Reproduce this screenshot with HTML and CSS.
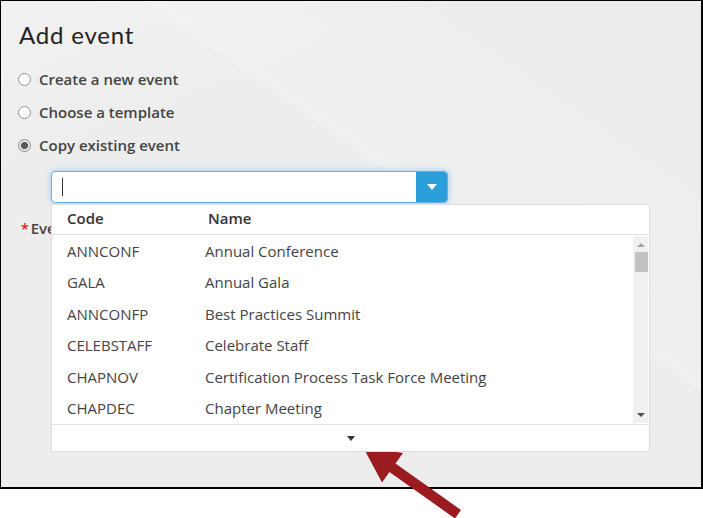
FILE: index.html
```html
<!DOCTYPE html>
<html lang="en">
<head>
    <meta charset="UTF-8">
    <meta name="viewport" content="width=device-width, initial-scale=1.0">
    <title>Add event</title>
    <link rel="stylesheet" href="styles.css">
</head>
<body>
    <div class="panel">
        <h1 class="title">Add event</h1>

        <div class="options">
            <label class="option"><input type="radio" name="mode"> Create a new event</label>
            <label class="option"><input type="radio" name="mode"> Choose a template</label>
            <label class="option"><input type="radio" name="mode" checked> Copy existing event</label>
        </div>

        <div class="combo">
            <div class="combo-input">
                <span class="caret-line"></span>
                <button class="combo-btn" type="button"><span class="tri-down"></span></button>
            </div>

            <div class="dropdown">
                <div class="dd-head">
                    <span class="col-code">Code</span>
                    <span class="col-name">Name</span>
                </div>
                <div class="dd-body">
                    <div class="dd-rows">
                        <div class="dd-row"><span>ANNCONF</span><span>Annual Conference</span></div>
                        <div class="dd-row"><span>GALA</span><span>Annual Gala</span></div>
                        <div class="dd-row"><span>ANNCONFP</span><span>Best Practices Summit</span></div>
                        <div class="dd-row"><span>CELEBSTAFF</span><span>Celebrate Staff</span></div>
                        <div class="dd-row"><span>CHAPNOV</span><span>Certification Process Task Force Meeting</span></div>
                        <div class="dd-row"><span>CHAPDEC</span><span>Chapter Meeting</span></div>
                    </div>
                    <div class="scrollbar">
                        <span class="sb-up"></span>
                        <span class="sb-thumb"></span>
                        <span class="sb-down"></span>
                    </div>
                </div>
                <div class="dd-foot"><span class="more"></span></div>
            </div>
        </div>

        <div class="field-label"><span class="req">*</span>Event name</div>
    </div>

    <!-- annotation arrow -->
    <svg class="pointer" width="703" height="518" viewBox="0 0 703 518">
        <polygon fill="#9b1b21" points="363,447 403,453 395.5,463.5 461,510 455,518.5 389.5,472 382,482.5"/>
    </svg>
</body>
</html>
```

FILE: styles.css
```css
body {
    margin: 0;
    background: #fff;
    font-family: "Open Sans", "Noto Sans", sans-serif;
    position: relative;
    width: 703px;
    height: 518px;
    overflow: hidden;
}

.panel {
    box-sizing: border-box;
    width: 703px;
    height: 489px;
    border: 1px solid #000;
    border-right-width: 2px;
    border-bottom-width: 2px;
    padding: 19px 18px 0;
    background-color: #ededed;
    background-image:
        linear-gradient(160deg, rgba(255,255,255,0.25) 0, rgba(255,255,255,0) 25%),
        linear-gradient(35deg, rgba(255,255,255,0) 60%, rgba(255,255,255,0.15) 60%, rgba(255,255,255,0) 85%);
}

.title {
    margin: 0;
    font-family: Lato, "Noto Sans", sans-serif;
    font-weight: 400;
    font-size: 24px;
    line-height: 30px;
    letter-spacing: 0.8px;
    color: #222;
}

.options {
    margin-top: 19px;
    display: flex;
    flex-direction: column;
    gap: 13px;
}

.option {
    display: flex;
    align-items: center;
    gap: 8px;
    font-size: 15px;
    font-weight: 600;
    line-height: 20px;
    color: #444;
}

.option input {
    appearance: none;
    -webkit-appearance: none;
    margin: 0 0 0 -1px;
    width: 13px;
    height: 13px;
    border: 1px solid #8f8f8f;
    border-radius: 50%;
    background: #fff;
    box-sizing: border-box;
}

.option input:checked {
    background: radial-gradient(circle, #5a5a5a 0 3.2px, #e3e3e3 3.8px);
}

.combo {
    position: relative;
    margin: 16px 0 0 32px;
    width: 397px;
}

.combo-input {
    box-sizing: border-box;
    height: 32px;
    display: flex;
    align-items: center;
    background: #fff;
    border: 1px solid #66afe9;
    border-radius: 4px;
    box-shadow: 0 0 6px rgba(102, 175, 233, 0.6);
    overflow: hidden;
}

.caret-line {
    width: 1px;
    height: 18px;
    margin-left: 10px;
    background: #333;
}

.combo-btn {
    margin-left: auto;
    width: 31px;
    height: 100%;
    border: 0;
    padding: 0;
    background: #2a9fd9;
    display: flex;
    align-items: center;
    justify-content: center;
}

.tri-down {
    width: 0;
    height: 0;
    border-left: 5px solid transparent;
    border-right: 5px solid transparent;
    border-top: 6px solid #fff;
}

.dropdown {
    position: absolute;
    top: 33px;
    left: 0;
    width: 599px;
    box-sizing: border-box;
    background: #fff;
    border: 1px solid #dedede;
    z-index: 2;
}

.dd-head {
    height: 30px;
    box-sizing: border-box;
    padding: 3px 15px 7px;
    display: flex;
    font-size: 15px;
    font-weight: 600;
    line-height: 20px;
    color: #333;
    border-bottom: 1px solid #e3e3e3;
}

.col-code {
    width: 141px;
}

.dd-body {
    display: flex;
    height: 189px;
}

.dd-rows {
    flex: 1;
}

.dd-row {
    display: grid;
    grid-template-columns: 138px 1fr;
    padding: 0 15px;
    height: 31.5px;
    align-items: center;
    font-size: 15px;
    line-height: 20px;
    color: #444;
}

.scrollbar {
    width: 15px;
    margin: 1px 1px 1px 0;
    background: #f1f1f1;
    display: flex;
    flex-direction: column;
    align-items: center;
    position: relative;
}

.sb-up, .sb-down {
    position: absolute;
    left: 4px;
    width: 0;
    height: 0;
    border-left: 4px solid transparent;
    border-right: 4px solid transparent;
}

.sb-up {
    top: 7px;
    border-bottom: 4px solid #a3a3a3;
}

.sb-down {
    bottom: 6px;
    border-top: 4px solid #505050;
}

.sb-thumb {
    margin-top: 16px;
    width: 13px;
    height: 20px;
    margin-left: 2px;
    background: #c1c1c1;
}

.dd-foot {
    height: 26px;
    border-top: 1px solid #e3e3e3;
    display: flex;
    align-items: center;
    justify-content: center;
}

.more {
    width: 0;
    height: 0;
    margin-left: 1px;
    border-left: 4px solid transparent;
    border-right: 4px solid transparent;
    border-top: 5px solid #333;
}

.field-label {
    margin-top: 15px;
    padding-left: 2px;
    font-size: 15px;
    font-weight: 600;
    line-height: 20px;
    color: #444;
}

.req {
    color: #e02020;
    font-size: 14px;
    margin-right: 2px;
}

.pointer {
    position: absolute;
    top: 0;
    left: 0;
    pointer-events: none;
}
```
